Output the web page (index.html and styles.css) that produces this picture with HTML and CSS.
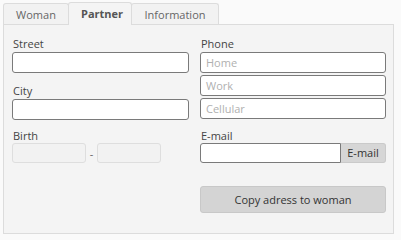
FILE: index.html
```html
<!DOCTYPE html>
<html>
<head>
<meta charset="utf-8">
<link rel="stylesheet" href="styles.css">
</head>
<body>
<div class="tabs">
  <div class="tab">Woman</div>
  <div class="tab active">Partner</div>
  <div class="tab">Information</div>
</div>
<div class="panel">
  <div class="col left">
    <div class="label">Street</div>
    <div class="input"></div>
    <div class="label gap">City</div>
    <div class="input"></div>
    <div class="label gap2">Birth</div>
    <div class="birth">
      <div class="input dis w1"></div>
      <span class="dash">-</span>
      <div class="input dis w2"></div>
    </div>
  </div>
  <div class="col right">
    <div class="label">Phone</div>
    <div class="input ph">Home</div>
    <div class="input ph mt2">Work</div>
    <div class="input ph mt2">Cellular</div>
    <div class="label gap3">E-mail</div>
    <div class="email">
      <div class="input em"></div>
      <div class="embtn">E-mail</div>
    </div>
    <div class="copy">Copy adress to woman</div>
  </div>
</div>
</body>
</html>
```
FILE: styles.css
```css
html, body { margin: 0; padding: 0; }
body {
  width: 401px; height: 240px;
  background: #fafafa;
  font-family: "Open Sans", "Noto Sans", sans-serif;
  font-size: 11px;
  color: #333;
  overflow: hidden;
}
.tabs {
  display: flex;
  margin-left: 3px;
  padding-top: 3px;
  height: 21px;
  align-items: flex-end;
}
.tab {
  box-sizing: border-box;
  height: 21px;
  border: 1px solid #dcdcdc;
  border-bottom: none;
  border-radius: 3px 3px 0 0;
  background: #f2f2f2;
  color: #666;
  text-align: center;
  line-height: 22px;
  padding: 0 12px;
  margin-right: -1px;
}
.tab:nth-child(1) { width: 66px; }
.tab.active {
  width: 64px;
  height: 23px;
  background: #f4f4f4;
  font-weight: bold;
  color: #555;
  position: relative;
  z-index: 1;
  margin-bottom: -1px;
  line-height: 22px;
}
.tab:nth-child(3) { width: 88px; }
.panel {
  box-sizing: border-box;
  width: 391px; height: 210px;
  margin-left: 3px;
  border: 1px solid #dcdcdc;
  background: #f4f4f4;
  padding: 11px 7px 0 8px;
  display: flex;
  gap: 11px;
}
.col { display: flex; flex-direction: column; }
.left { width: 177px; }
.right { width: 186px; }
.label { height: 16px; line-height: 16px; padding-left: 1px; color: #444; }
.gap { margin-top: 10px; }
.gap2 { margin-top: 8px; height: 15px; }
.gap3 { margin-top: 9px; height: 15px; }
.input {
  box-sizing: border-box;
  height: 21px;
  border: 1px solid #7a7a7a;
  border-radius: 3px;
  background: #fff;
}
.ph { color: #b0b0b0; padding-left: 5px; line-height: 19px; }
.mt2 { margin-top: 2px; }
.birth { display: flex; align-items: center; height: 20px; }
.dis { height: 20px; border-color: #dedede; background: #f2f2f2; }
.w1 { width: 74px; }
.w2 { width: 64px; }
.dash { width: 11px; text-align: center; color: #666; }
.email { display: flex; height: 20px; }
.em { height: 20px; width: 141px; border-radius: 3px 0 0 3px; }
.embtn {
  box-sizing: border-box;
  width: 45px; height: 20px;
  background: #d6d6d6;
  border: 1px solid #cacaca;
  border-left: none;
  border-radius: 0 3px 3px 0;
  text-align: center;
  line-height: 18px;
  color: #333;
}
.copy {
  box-sizing: border-box;
  margin-top: 23px;
  height: 27px;
  background: #d4d4d4;
  border: 1px solid #c8c8c8;
  border-radius: 3px;
  text-align: center;
  line-height: 25px;
  color: #333;
}
```
